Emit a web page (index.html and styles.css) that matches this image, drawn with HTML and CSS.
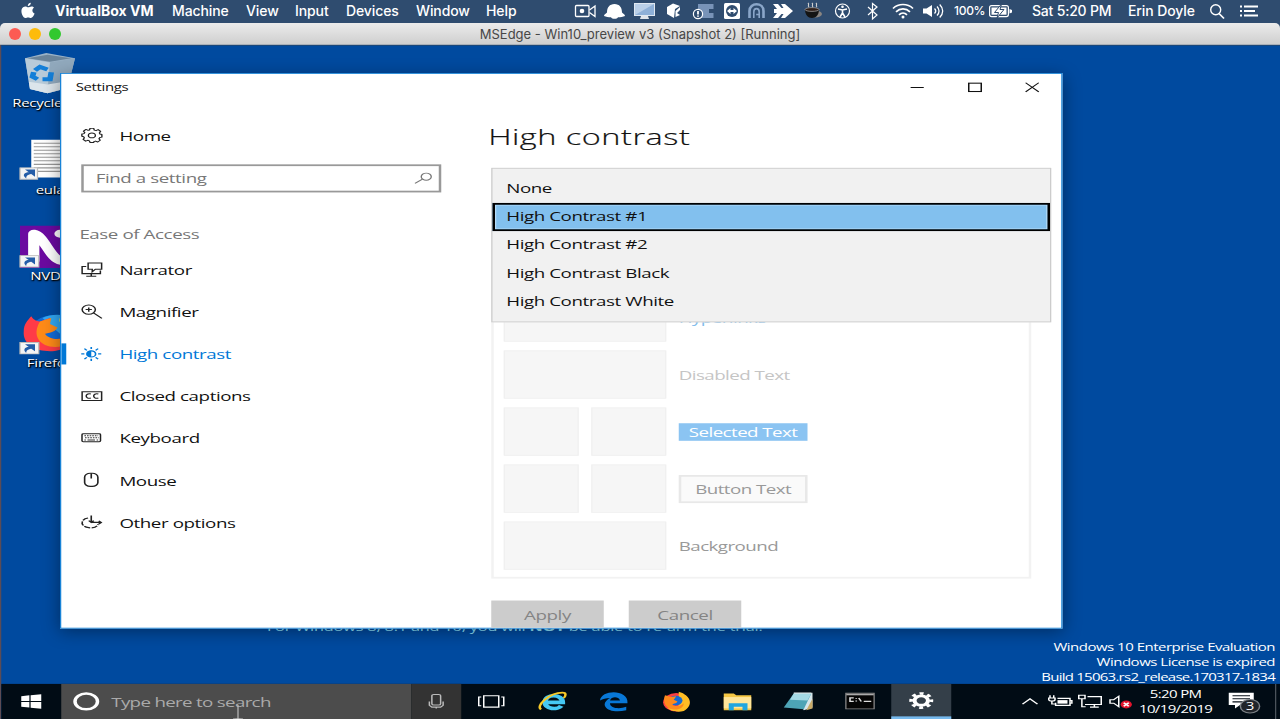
FILE: index.html
```html
<!DOCTYPE html>
<html lang="en">
<head>
<meta charset="utf-8">
<title>MSEdge - Win10_preview v3</title>
<link rel="stylesheet" href="styles.css">
</head>
<body>
<header class="menubar">
  <svg class="apple" width="55" height="22" viewBox="0 0 55 22"><path transform="translate(1 .5)" fill="#fff" d="M29.8 2.200c.2 1.800-1.400 3.500-3 3.400-.2-1.700 1.300-3.300 3-3.400zM33 7.200c-2.200 1.200-2.200 4.700.6 5.800-.6 2-2.300 4.500-3.700 4.500-1.100 0-1.500-.6-2.800-.6s-1.600.6-2.700.6c-2.200 0-4.700-5-3.800-8.500.5-1.900 2.200-3 3.800-3 1.200 0 1.900.8 2.900.8.900 0 1.900-.9 3.300-.9 1 0 1.900.5 2.400 1.300z"/></svg>
  <nav class="menus">
    <span class="app">VirtualBox VM</span><span>Machine</span><span>View</span><span>Input</span><span>Devices</span><span>Window</span><span>Help</span>
  </nav>
  <div class="status">
    <svg width="30" height="22" viewBox="570 0 30 22"><g fill="none" stroke="#fff" stroke-width="1.300"><rect x="575.500" y="5.500" width="13.500" height="11" rx="1"/><path d="M589.500 10l5.500-4v10.500l-5.500-4"/></g><circle cx="582" cy="11" r="2.300" fill="#fff"/></svg>
    <svg width="30" height="22" viewBox="600 0 30 22"><path fill="#fff" d="M604 16c0-1.500 1.500-2 3-3.500 0-5 2.500-8.500 7.500-8.500s7.500 3.500 7.500 8.500c1.500 1.500 3 2 3 3.500-2 1-4.500 1.200-7 1.300-1 2-6 2-7 0-2.500-.1-5-.3-7-1.300z"/></svg>
    <svg width="31" height="22" viewBox="630 0 31 22"><rect x="634.500" y="3.500" width="20" height="12" fill="#8eb0d8" stroke="#dfe8f2"/><path fill="#b9cfe8" d="M635 4h19l-19 11z"/><path fill="#dfe4ea" d="M641 16h7l1 3h-9z"/></svg>
    <svg width="28" height="22" viewBox="661 0 28 22"><path fill="#fff" d="M667 7l6-3.500 7 2.500-5 3-1 9-7-4z"/><path fill="#fff" d="M675.500 11l4.500-4v3l-3 3 3 2-4.500 2z"/></svg>
    <svg width="31" height="22" viewBox="689 0 31 22"><path fill="#7893b8" d="M698 4h15.500v5H709v4h4.500v5H698z"/><circle cx="698" cy="14" r="4.600" fill="#2f4c6f" stroke="#fff" stroke-width="1.200"/><path d="M698 11v3.500M698 15.500v1.300" stroke="#fff" stroke-width="1.800"/></svg>
    <svg width="25" height="22" viewBox="720 0 25 22"><rect x="724" y="3" width="16" height="16" rx="1.500" fill="#fff"/><circle cx="732" cy="11" r="6" fill="#2f4c6f"/><path fill="#fff" d="M727 11l3.500-3v2h3V8l3.500 3-3.500 3v-2h-3v2z"/></svg>
    <svg width="25" height="22" viewBox="745 0 25 22"><path fill="none" stroke="#8aa6c9" stroke-width="2.600" d="M749.500 18v-7c0-9 14-9 14 0v7"/><path fill="none" stroke="#8aa6c9" stroke-width="1.600" d="M753.800 18v-6c0-4.500 5.400-4.500 5.400 0v2.500h-3M759.200 14v4"/></svg>
    <svg width="29" height="22" viewBox="770 0 29 22"><path fill="#fff" d="M773 4h5l3.500 4h2L781 4h4l8 7-8 7h-4l2.500-4h-2L778 18h-5l4-5h-3v-4h3z"/></svg>
    <svg width="29" height="22" viewBox="799 0 29 22"><ellipse cx="815" cy="14" rx="7" ry="3.500" fill="#8a8581"/><path fill="#141414" d="M805 9h14c0 6-3 9-7 9s-7-3-7-9z"/><ellipse cx="812" cy="9.500" rx="7" ry="1.900" fill="#33231d" stroke="#aaa" stroke-width=".7"/><path fill="none" stroke="#d1d1d1" stroke-width="1.100" d="M809 7c-2-2 1-2-1-4M813 7c-2-2 1-2-1-4M817 7c-2-2 1-2-1-4"/></svg>
    <svg width="30" height="22" viewBox="828 0 30 22"><g stroke="#fff" fill="none" stroke-width="1.200"><circle cx="842.500" cy="11" r="7"/><path stroke-width="1.600" d="M838 9l4.500 1 4.500-1M842.500 10v3l-2.500 4M842.500 13l2.500 4"/></g><circle cx="842.500" cy="6.800" r="1.300" fill="#fff"/></svg>
    <svg width="28" height="22" viewBox="858 0 28 22"><path fill="none" stroke="#fff" stroke-width="1.200" d="M868 7l9 8-4.500 4V3.500L877 7l-9 8"/></svg>
    <svg width="32" height="22" viewBox="886 0 32 22"><g fill="none" stroke="#fff" stroke-width="1.700"><path d="M893 8.500c5.500-5.300 14.500-5.300 20 0M896 11.800c4-3.800 10-3.800 14 0M899 14.800c2.300-2.200 5.700-2.200 8 0"/></g><circle cx="903" cy="17" r="1.500" fill="#fff"/></svg>
    <svg width="35" height="22" viewBox="918 0 35 22"><path fill="#fff" d="M923 8.500h3.500L932 5v12l-5.500-3.500H923z"/><path fill="none" stroke="#fff" stroke-width="1.300" d="M934.500 8.500c1.500 1.500 1.500 3.500 0 5M937 6.500c2.700 2.700 2.700 6.500 0 9M939.700 4.500c4 4 4 9 0 13"/></svg>
    <span class="pct">100%</span>
    <svg width="32" height="22" viewBox="985 0 32 22"><rect x="989.600" y="5.600" width="18.800" height="11" rx="2" fill="none" stroke="#fff" stroke-width="1.200"/><rect x="991.500" y="7.500" width="15" height="7.200" fill="#fff"/><path fill="#fff" d="M1009.500 9l2.500 1v2.500l-2.500 1z"/><path fill="#fff" stroke="#2f4c6f" stroke-width="1" d="M1001.500 4l-7 8.500h4l-1.500 5.500 7-8.500h-4z"/></svg>
    <span class="date">Sat 5:20 PM</span><span class="user">Erin Doyle</span>
    <svg width="30" height="22" viewBox="1202 0 30 22"><circle cx="1215.700" cy="9.700" r="5" fill="none" stroke="#fff" stroke-width="1.400"/><path d="M1219 13.500l5 5" stroke="#fff" stroke-width="1.700"/></svg>
    <svg width="48" height="22" viewBox="1232 0 48 22"><path stroke="#fff" stroke-width="1.900" d="M1240 6.500h2M1244 6.500h14M1240 11h2M1244 11h11M1240 15.500h2M1244 15.500h14"/></svg>
  </div>
</header>
<div class="vmtitle">
  <div class="lights"><i class="red"></i><i class="yellow"></i><i class="green"></i></div>
  <span class="vmname">MSEdge - Win10_preview v3 (Snapshot 2) [Running]</span>
</div>
<div class="screen">
<div class="guest">
  <div class="desktop">
    <div class="shortcut bin">
      <svg width="42" height="48" viewBox="0 0 42 48"><path fill="#9bb3c7" d="M1 6L18 0l23 6-6 34-16 6-14-5z"/><path fill="#6b8499" d="M3 6l16-4 19 4-17 4z"/><path fill="#b8cbd9" d="M1 6l20 5-2 35-14-5z"/><path fill="#91a9bd" d="M21 11l20-5-6 34-16 6z"/><path fill="#dce5eb" d="M4 33l15 3 17-4-1 8-16 6-14-5z"/><g fill="none" stroke="#147fd8" stroke-width="4.500"><path d="M9 20l4-4 6 3M22 22l-1 8-6 0M11 30l-4-3 1-5"/></g></svg>
      <span>Recycle Bin</span>
    </div>
    <div class="shortcut eula">
      <svg width="42" height="48" viewBox="0 0 42 48"><path fill="#fff" d="M6 0h30v43H6z"/><path stroke="#999" stroke-width="1.200" d="M8 4h26M8 8h26M8 12h26M8 16h26M8 20h26M8 24h26M8 28h26M8 32h26M8 36h26"/><path fill="#f4f4f4" stroke="#bbb" d="M-3 32h14v13H-3z"/><path fill="#245da8" d="M1 34h8v8l-3-3c-3 1-4 2-4 5-4-4-1-7 2-7z"/></svg>
      <span>eula</span>
    </div>
    <div class="shortcut nvda">
      <svg width="48" height="48" viewBox="0 0 48 48"><path fill="#6b0aa0" d="M0 0h48v48H0z"/><path fill="none" stroke="#fff" stroke-width="9" stroke-linecap="round" stroke-linejoin="round" d="M11 40V9c8 2 13 29 22 31M32 9h5v4"/><path fill="#f4f4f4" stroke="#bbb" d="M0 34h15v13H0z"/><path fill="#245da8" d="M4 36h8v8l-3-3c-3 1-4 2-4 5-3-4-1-7 2-7z"/></svg>
      <span>NVDA</span>
    </div>
    <div class="shortcut fox">
      <svg width="48" height="48" viewBox="0 0 48 48"><circle cx="27" cy="22" r="19" fill="#126cd8"/><path fill="#31a9f4" d="M18 6c12-8 28-2 30 12L32 24z"/><path fill="#ff3b47" d="M9 4c2 4 3 5 7 6l8-4-1 7 5 4c-1 5-5 6-9 7 4 8 15 8 22 0 1 12-6 20-17 20C12 44 2 36 3 21 3 13 6 9 9 4z"/><path fill="#ff8b18" d="M16 10l9-4-1 7 6 4c-1 4-5 6-10 7 3 7 14 9 22 0 0 8-5 15-14 15-12 0-19-13-12-29z"/><path fill="#ffe226" d="M36 0c-6 5-6 12 0 15 6 5 8 12 5 19 9-10 6-28-5-34z"/><path fill="#f4f4f4" stroke="#bbb" d="M0 34h15v13H0z"/><path fill="#245da8" d="M4 36h8v8l-3-3c-3 1-4 2-4 5-3-4-1-7 2-7z"/></svg>
      <span>Firefox</span>
    </div>
    <p class="rearm">For Windows 8, 8.1 and 10, you will <b>NOT</b> be able to re-arm the trial.</p>
    <div class="watermark">Windows 10 Enterprise Evaluation<br>Windows License is expired<br><span>Build 15063.rs2_release.170317-1834</span></div>

    <section class="window">
      <div class="titlebar"><span>Settings</span>
        <svg width="138" height="32" viewBox="0 0 138 32"><g fill="none" stroke="#111" stroke-width="1.100"><path d="M17.500 15.500h10.500"/><rect x="64" y="10.500" width="10" height="9.500" stroke-width="1.200"/><path d="M109.500 10l10.500 10.500M120 10l-10.500 10.500"/></g></svg>
      </div>
      <div class="columns">
        <aside class="side">
          <div class="nav home"><svg width="17" height="18" viewBox="0 0 17 18"><g fill="none" stroke="#222" stroke-width="1.100" stroke-linejoin="round"><path d="M7 1h3l.4 2 1.400.6L13.500 2.400l2 2-1 1.800.5 1.300 1.500.5v3l-1.700.5-.6 1.300 1 1.700-2 2-1.800-1-1.300.6L10 17H7l-.5-1.800-1.300-.6-1.700 1-2-2 1-1.800-.6-1.300L.5 10V7.500L2.200 7l.6-1.300-1-1.500 2-2 1.700 1L6.600 3z"/><circle cx="8.500" cy="9" r="2.800"/></g></svg><span>Home</span></div>
          <div class="find"><span>Find a setting</span><svg width="16" height="16" viewBox="0 0 16 16"><g fill="none" stroke="#777" stroke-width="1.100"><circle cx="10" cy="7" r="4"/><path d="M7 9.700l-6 5"/></g></svg></div>
          <h2>Ease of Access</h2>
          <div class="nav"><svg width="17" height="18" viewBox="0 0 17 18"><g fill="none" stroke="#222" stroke-width="1.200"><path d="M4 5.500H.7v8h14.600V10M8 14v3M4 16.500h8"/><path d="M5.500 1.500h10.800v7h-5l-2.500 3v-3H5.500z"/></g></svg><span>Narrator</span></div>
          <div class="nav"><svg width="17" height="18" viewBox="0 0 17 18"><g fill="none" stroke="#222" stroke-width="1.200"><circle cx="6" cy="6.500" r="5.300"/><path d="M3.500 6.500h5M6 4v5M9.800 10.300l6.700 6.200"/></g></svg><span>Magnifier</span></div>
          <div class="nav active"><svg width="17" height="18" viewBox="0 0 17 18"><g fill="none" stroke="#0078d7" stroke-width="1.300"><circle cx="8" cy="9" r="3.500"/><path d="M8 1v2.500M8 14.500V17M0 9h2.500M13.500 9H16M2.500 3l2 2M11.500 13l2 2M13.500 3l-2 2M4.500 13l-2 2"/></g><path fill="#0078d7" d="M8 5.500a3.500 3.500 0 000 7z"/></svg><span>High contrast</span></div>
          <div class="nav"><svg width="17" height="18" viewBox="0 0 17 18"><g fill="none" stroke="#222" stroke-width="1.200"><path d="M.7 4h15.600v10H.7zM7.700 6.800c-5-2-5 6.500 0 4.500M13.700 6.800c-5-2-5 6.500 0 4.500"/></g></svg><span>Closed captions</span></div>
          <div class="nav"><svg width="17" height="18" viewBox="0 0 17 18"><rect x=".6" y="4" width="14.800" height="9" rx="1" fill="none" stroke="#222" stroke-width="1.200"/><path stroke="#333" stroke-width="1.200" stroke-dasharray="1.300 .8" d="M2.500 6.300h11M3 8.500h11"/><path stroke="#333" stroke-width="1.200" d="M2.500 11h1.200M5 11h6M12.300 11h1.200"/></svg><span>Keyboard</span></div>
          <div class="nav"><svg width="17" height="18" viewBox="0 0 17 18"><g fill="none" stroke="#222" stroke-width="1.300"><rect x="2.700" y="1" width="10.600" height="15" rx="4.500"/><path d="M8 1v6"/></g></svg><span>Mouse</span></div>
          <div class="nav"><svg width="17" height="18" viewBox="0 0 17 18"><g fill="none" stroke="#222" stroke-width="1.300"><path stroke-dasharray="5 1.200" d="M5.500 4C-1 5-1 14 6 15c4 .8 7-1 7.500-4"/><path d="M8 1v8M6 7l2 2 2-2M8 9h8M14 7.200L16 9l-2 1.800"/></g></svg><span>Other options</span></div>
        </aside>
        <main class="main">
          <h1>High contrast</h1>
          <div class="preview">
            <div class="row"><div class="sw"><i></i></div><span class="link">Hyperlinks</span></div>
            <div class="row"><div class="sw"><i></i></div><span class="disabled">Disabled Text</span></div>
            <div class="row"><div class="sw"><i></i><i></i></div><span class="selected">Selected Text</span></div>
            <div class="row"><div class="sw"><i></i><i></i></div><span class="button">Button Text</span></div>
            <div class="row"><div class="sw"><i></i></div><span>Background</span></div>
          </div>
          <div class="actions"><span>Apply</span><span>Cancel</span></div>
          <div class="dropdown"><div>None</div><div class="on">High Contrast #1</div><div>High Contrast #2</div><div>High Contrast Black</div><div>High Contrast White</div></div>
        </main>
      </div>
    </section>
  </div>

  <footer class="taskbar">
    <div class="task start"><svg width="18" height="18" viewBox="0 0 18 18"><path fill="#fff" d="M1 3l6.500-1v6.500H1zM8.500 1.800L17 .7v7.800H8.500zM1 9.500h6.500V16L1 15zM8.500 9.500H17v7.800l-8.500-1.100z"/></svg></div>
    <div class="search"><svg width="22" height="22" viewBox="0 0 22 22"><circle cx="11" cy="11" r="9" fill="none" stroke="#fff" stroke-width="2.800"/></svg><span>Type here to search</span></div>
    <div class="mic"><svg width="14" height="20" viewBox="0 0 14 20"><g fill="none" stroke="#bbb" stroke-width="1.200"><rect x="3.500" y="2" width="7" height="12" rx="1.500"/><path d="M1.500 10v4.500l2 2h7l2-2V10M7 16v2"/></g></svg></div>
    <div class="tasks">
      <div class="task"><svg width="24" height="24" viewBox="0 0 24 24"><g fill="none" stroke="#fff" stroke-width="1.200"><path d="M6 5.500h12v13H6zM4 7H2v10h2M20 7h2v10h-2"/></g></svg></div>
      <div class="task"><svg width="24" height="24" viewBox="0 0 24 24"><path fill="none" stroke="#45c8f3" stroke-width="4.200" d="M6 13h14c0-10-14-10-14 0 0 8 10 9 13 4"/><path fill="none" stroke="#f7c928" stroke-width="2" d="M3 21C-2 18 9 2 20 2c3 0 3 3 1 6"/></svg></div>
      <div class="task"><svg width="24" height="24" viewBox="0 0 24 24"><path fill="#0878d7" d="M1 11C2-2 24-2 23 14H9c0 6 8 7 13 4v4C8 27-1 16 9 8c-3 0-6 1-8 3zM9 11h8c-1-5-7-5-8 0z"/></svg></div>
      <div class="task"><svg width="24" height="24" viewBox="0 0 24 24"><circle cx="12" cy="13" r="10.500" fill="#ff4040"/><path fill="#ffbd24" d="M14 1c10 4 12 16 4 22-5 2-11 0-13-4 7 2 13-4 9-10z"/><circle cx="11.500" cy="11" r="5.500" fill="#1769d2"/><path fill="#ff8a1c" d="M3 5l5 2 4-1-2 4 3 2c-1 3-4 2-4 4 2 2 6 2 9-2 0 6-5 8-9 7C3 20 1 12 3 5z"/></svg></div>
      <div class="task"><svg width="24" height="24" viewBox="0 0 24 24"><path fill="#f5c744" d="M1 3h8l2 2h12v17H1z"/><path fill="#ffe69a" d="M1 7h22v13H1z"/><path fill="#21a6df" d="M5 22v-8h15v8h-4v-4H9v4z"/></svg></div>
      <div class="task"><svg width="26" height="24" viewBox="0 0 26 24"><path fill="#d5e5ea" d="M9 2h15v17l-7 3z"/><path fill="#4da4b6" d="M9 3h14l-6 18L1 19z"/><path fill="#a4d9e4" d="M9 3h14l-3 8-14-1z"/><path stroke="#eee" d="M9 2.500h14"/><path fill="#c9aa67" d="M24 9v11l-5 2z"/></svg></div>
      <div class="task"><svg width="24" height="22" viewBox="0 0 24 22"><path fill="#050505" stroke="#8b8b8b" d="M.7 1.500h22.600v18H.7z"/><path fill="#aaa" d="M1 2h22v2H1z"/><path fill="none" stroke="#ddd" stroke-width="1.300" d="M7 7H4v4h3M9 7v1M9 10v1M11 7l2 4M15 11h6"/></svg></div>
      <div class="task current"><svg width="20" height="20" viewBox="0 0 20 20"><circle cx="10" cy="10" r="5.400" fill="none" stroke="#fff" stroke-width="3.300"/><circle cx="10" cy="10" r="8.100" fill="none" stroke="#fff" stroke-width="3" stroke-dasharray="3.200 3.160" stroke-dashoffset="1.600"/></svg></div>
    </div>
    <div class="tray">
      <svg width="24" height="20" viewBox="0 0 24 20"><path fill="none" stroke="#fff" stroke-width="1.300" d="M6 13l6-6 6 6"/></svg>
      <svg width="24" height="20" viewBox="0 0 24 20"><g fill="none" stroke="#fff" stroke-width="1.200"><path d="M10 6.500h10v8H8.500v-3M20 9h1.500v3H20M4 3v3M7 3v3M3 6h5v2c0 2-5 2-5 0zM5.500 10v3h3"/></g><path fill="#fff" d="M10 8.500h8v4h-8z"/></svg>
      <svg width="24" height="20" viewBox="0 0 24 20"><g fill="none" stroke="#fff" stroke-width="1.200"><path d="M10 4.500h11v9H8M12 16.500h7M15.500 13.500v3M3 3h5v4H3zM5.500 7v9h3"/></g></svg>
      <svg width="24" height="20" viewBox="0 0 24 20"><path fill="none" stroke="#fff" stroke-width="1.200" d="M4 8h3l4-4v12l-4-4H4z"/><circle cx="17" cy="13.500" r="4.500" fill="#e3132c"/><path stroke="#fff" stroke-width="1.500" d="M15 11.500l4 4M19 11.500l-4 4"/></svg>
      <div class="clock">5:20 PM<br>10/19/2019</div>
      <svg class="notes" width="36" height="30" viewBox="0 0 36 30"><path fill="#fff" d="M4 5h20v14H13l-4 4v-4H4z"/><path stroke="#08101a" stroke-width="1.200" d="M7 8.500h14M7 12h14M7 15.500h9"/><circle cx="21" cy="20.500" r="7.700" fill="#20242a" stroke="#7d8287" stroke-width="1.200"/><text x="21" y="25" text-anchor="middle">3</text></svg>
    </div>
  </footer>
</div>
<svg class="caret" width="10" height="16" viewBox="0 0 10 16"><path fill="none" stroke="#bbb" stroke-width="1.200" d="M5 0v13M0 14c3 0 5-.3 5-1 0 .7 2 1 5 1"/></svg>
</div>
</body>
</html>
```
FILE: styles.css
```css
* { box-sizing: border-box; }
body { margin: 0; width: 1280px; height: 719px; overflow: hidden; background: #2f4c6f; font-family: "Open Sans", "Noto Sans", sans-serif; }
svg { display: block; flex: none; overflow: visible; }
.menubar { display: flex; height: 23px; color: #fff; font: 500 14px/22px Inter, sans-serif; white-space: nowrap; }
.menus { display: grid; grid-template-columns: 117px 74px 49px 51px 70px 70px 40px; letter-spacing: -.1px; }
.menus .app { font-weight: 700; letter-spacing: 0; }
.status { display: flex; margin-left: auto; }
.pct { width: 32px; padding-left: 1px; font-size: 12px; letter-spacing: -.3px; }
.date { width: 96px; padding-left: 15px; letter-spacing: -.2px; }
.user { width: 89px; padding-left: 15px; letter-spacing: -.1px; }
.vmtitle { display: flex; align-items: center; justify-content: center; position: relative; height: 22px; border-radius: 5px 5px 0 0; background: linear-gradient(#ebebeb, #cfcfcf); border-bottom: 1px solid #a9b0b8; color: #474747; font: 13px/22px Inter, sans-serif; }
.lights { position: absolute; left: 9px; display: flex; gap: 8px; }
.lights i { width: 12px; height: 12px; border-radius: 50%; }
.red { background: #fc5b53; }
.yellow { background: #fdbb0b; }
.green { background: #32c82f; }
.screen { position: relative; height: 674px; overflow: hidden; }

/* The 1024x768 guest display is stretched to fill the VM window. */
.guest { display: flex; flex-direction: column; width: 1024px; height: 768px; transform: scale(1.25, .8776); transform-origin: 0 0; background: #004a9f; border-left: 1px solid #5c4c55; }
.desktop { position: relative; height: 728px; overflow: hidden; border-top: 1px solid #1d4777; }
.shortcut { position: absolute; left: 1px; width: 76px; display: flex; flex-direction: column; align-items: center; color: #fff; font-size: 12px; line-height: 16px; letter-spacing: -.2px; text-shadow: 0 1px 2px #000, 1px 1px 1px #000; }
.shortcut span { margin-top: 2px; }
.bin { top: 8px; }
.eula { top: 107px; }
.nvda { top: 205px; }
.fox { top: 304px; }
.rearm { position: absolute; left: 212.500px; top: 652px; margin: 0; color: #8fe4ff; font-size: 13px; line-height: 20px; letter-spacing: -.13px; white-space: nowrap; }
.watermark { position: absolute; right: 4px; top: 677px; color: #fff; font-size: 12px; line-height: 17px; letter-spacing: -.4px; text-align: right; white-space: nowrap; }
.watermark span { letter-spacing: -.6px; }

.window { position: absolute; left: 47px; top: 31px; width: 802px; height: 633px; overflow: hidden; background: #fff; border: 1px solid #1883d7; color: #111; font-size: 15px; letter-spacing: -.34px; box-shadow: 0 4px 16px rgba(0, 0, 0, .4); }
.titlebar { display: flex; justify-content: space-between; height: 31px; padding-left: 11.500px; font-size: 12px; line-height: 29px; letter-spacing: -.3px; }
.columns { display: flex; height: 602px; }
.side { width: 320px; padding-top: 15px; }
.nav { display: flex; align-items: center; gap: 14px; height: 48px; padding-left: 15.500px; line-height: 20px; }
.nav.active { color: #0078d7; background: linear-gradient(#0078d7, #0078d7) 0 12px / 4px 24px no-repeat; }
.find { display: flex; align-items: center; justify-content: space-between; width: 288px; height: 32px; margin: 9px 0 0 15.500px; padding: 0 4px 2px 10px; border: 2px solid #999; color: #777; }
.side h2 { margin: 37px 0 7px 14.500px; color: #777; font-size: 15px; font-weight: 400; line-height: 20px; }
.main { position: relative; flex: 1; padding-left: 24px; }
.main h1 { margin: 21.500px 0 0 -2.500px; font-size: 26px; font-weight: 300; line-height: 36px; letter-spacing: .4px; -webkit-text-stroke: .2px #111; }
.preview { display: flex; flex-direction: column; gap: 10px; width: 432px; height: 424px; margin-top: 62px; padding: 97px 8px 0; border: 2px solid #f2f2f2; color: #999; }
.row { display: flex; flex: none; align-items: center; gap: 10px; height: 55px; line-height: 20px; letter-spacing: -.45px; }
.row > span { margin-top: 2px; }
.sw { display: flex; gap: 10px; width: 130px; height: 55px; }
.sw i { flex: 1; background: #f6f6f6; border: 1px solid #f0f0f0; }
.link { color: #80bbeb; }
.disabled { color: #c5c5c5; }
.selected, .button { width: 103px; text-align: center; }
.selected { background: #8bc4f2; color: #fff; }
.button { height: 32px; line-height: 28px; border: 2px solid #e8e8e8; background: #fafafa; }
.actions { display: flex; gap: 20px; margin-top: 25px; }
.actions span { width: 90px; height: 34px; line-height: 33px; background: #ccc; color: #848484; text-align: center; }
.dropdown { position: absolute; left: 24px; top: 76px; width: 448px; height: 176px; padding-top: 7px; background: #f1f1f1; border: 1px solid #ccc; line-height: 30px; }
.dropdown div { height: 32px; padding-left: 11px; }
.dropdown .on { border: 2px solid #000; box-shadow: inset 0 0 0 1px #b6dcf7; background: #82c0ee; line-height: 26px; padding-left: 9px; }

.taskbar { display: flex; height: 40px; background: #010c15; }
.task { display: flex; align-items: center; justify-content: center; width: 48px; height: 40px; }
.search { display: flex; align-items: center; gap: 9px; width: 280px; padding-left: 9px; background: #4c4c4c; color: #aaa; font-size: 15px; letter-spacing: -.55px; }
.mic { display: flex; align-items: center; justify-content: center; width: 40px; background: #333; }
.tasks { display: flex; gap: 1.200px; }
.current { background: #343f49; border-bottom: 3px solid #76b9ed; }
.tray { display: flex; align-items: center; width: 209.500px; margin-left: auto; color: #fff; border-right: 1px solid #4b535b; margin-right: 3px; }
.clock { width: 66px; margin-top: -1px; font-size: 12px; line-height: 17px; letter-spacing: -.5px; text-align: center; }
.notes { margin-left: 5px; }
.notes text { fill: #fff; font-size: 12px; }
.caret { position: absolute; left: 233px; top: 660px; }
```
